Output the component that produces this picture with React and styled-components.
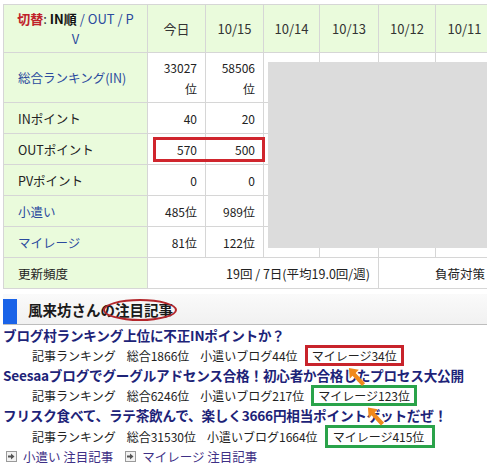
import React from "react";
import styled, { createGlobalStyle } from "styled-components";

const Global = createGlobalStyle`
  html, body { margin: 0; padding: 0; background: #fff; overflow: hidden; }
  body { font-family: "Noto Sans CJK JP", "Noto Sans", sans-serif; color: #222; }
`;

const Page = styled.div`
  width: 487px;
  height: 474px;
  padding: 4px 0 0 3px;
  box-sizing: border-box;
  overflow: hidden;
`;

const TableWrap = styled.div`
  position: relative;
  width: 484px;
  overflow: hidden;
`;

const Table = styled.table`
  border-collapse: collapse;
  table-layout: fixed;
  width: 490px;
  font-size: 12px;
`;

const Th = styled.th`
  background: #eafbdc;
  border: 1px solid #d6d6d6;
  font-weight: normal;
  font-size: 13px;
  height: 47px;
  padding: 0;
  text-align: center;
  color: #333;
  line-height: 20px;
`;

const Label = styled.td`
  background: #eafbdc;
  border: 1px solid #d6d6d6;
  padding: 0 0 0 14px;
  height: ${(p) => p.$h || 30}px;
  color: ${(p) => (p.$link ? "#2b4a9e" : "#222")};
  font-size: 12.5px;
`;

const Num = styled.td`
  border: 1px solid #d6d6d6;
  text-align: right;
  padding: 0 8px 0 0;
  line-height: 21px;
  color: #222;
`;

const Empty = styled.td`
  border: 1px solid #d6d6d6;
`;

const Wide = styled.td`
  border: 1px solid #d6d6d6;
  text-align: ${(p) => p.$align || "right"};
  padding: ${(p) => p.$pad || "0 8px 0 0"};
  white-space: nowrap;
  font-size: 12.5px;
`;

const Red = styled.span`
  color: #c0222a;
  font-weight: bold;
`;
const Bold = styled.span`
  font-weight: bold;
  color: #111;
`;
const HLink = styled.span`
  color: #2b4a9e;
`;

const GrayBlock = styled.div`
  position: absolute;
  left: 265px;
  top: 58px;
  width: 240px;
  height: 186px;
  background: #dcdcdc;
`;

const RedRect = styled.div`
  position: absolute;
  left: 150px;
  top: 133px;
  width: 112px;
  height: 25px;
  box-sizing: border-box;
  border: 3px solid #d0252d;
`;

const Heading = styled.div`
  position: relative;
  margin-top: 5px;
  height: 31px;
  box-sizing: border-box;
  display: flex;
  align-items: flex-end;
  gap: 11px;
  background: linear-gradient(#fafafa, #f1f1f1);
  border-bottom: 1px solid #bdbdbd;
`;

const BlueMark = styled.div`
  width: 14px;
  height: 25px;
  background: #1a63e8;
`;

const HeadText = styled.div`
  font-size: 14.5px;
  font-weight: bold;
  color: #1a1a1a;
  line-height: 29px;
  align-self: center;
`;

const Ellipse = styled.div`
  position: absolute;
  left: 100px;
  top: 5px;
  width: 74px;
  height: 22px;
  box-sizing: border-box;
  border: 2.5px solid #b3262b;
  border-radius: 50%;
`;

const Articles = styled.div`
  position: relative;
  width: 484px;
`;

const Title = styled.div`
  font-size: 13.6px;
  font-weight: bold;
  color: #1d2378;
  line-height: 20px;
  white-space: nowrap;
  letter-spacing: -0.2px;
`;

const Meta = styled.div`
  display: flex;
  align-items: center;
  gap: 11px;
  padding-left: 29px;
  height: ${(p) => p.$h || 20}px;
  font-size: 12px;
  color: #222;
  white-space: nowrap;
`;

const Boxed = styled.span`
  display: inline-block;
  margin-left: -4px;
  padding: ${(p) => (p.$tall ? "1px 8px 1px 5px" : "0 4px 0 4px")};
  line-height: 15px;
  border: 3px solid ${(p) => (p.$green ? "#2aa34a" : "#c8232b")};
`;

const Arrow = styled.svg`
  position: absolute;
  left: ${(p) => p.$x}px;
  top: ${(p) => p.$y}px;
`;

const Links = styled.div`
  display: flex;
  align-items: center;
  gap: 6px;
  padding-left: 3px;
  font-size: 12.5px;
  line-height: 17px;
  color: #3e2f86;
`;

const LinkItem = styled.span`
  margin-right: 6px;
`;

const IconBox = styled.span`
  display: inline-flex;
  align-items: center;
  justify-content: center;
  width: 9px;
  height: 9px;
  border: 1px solid #9a9a9a;
  background: #f2f2f2;
`;

const OrangeArrow = ({ x, y, w, h }) => (
  <Arrow $x={x} $y={y} width={w} height={h} viewBox="0 0 20 22">
    <polygon
      points="1,1 12,3 8.5,6.5 19,18 15.5,21 5,9.5 2,13"
      fill="#f0891c"
    />
  </Arrow>
);

const SmallIcon = () => (
  <IconBox>
    <svg width="7" height="7" viewBox="0 0 7 7">
      <polygon points="0,2.5 3,2.5 3,0.5 6.5,3.5 3,6.5 3,4.5 0,4.5" fill="#555" />
    </svg>
  </IconBox>
);

const rows = [
  { label: "INポイント", a: "40", b: "20" },
  { label: "OUTポイント", a: "570", b: "500" },
  { label: "PVポイント", a: "0", b: "0" },
  { label: "小遣い", a: "485位", b: "989位", link: true },
  { label: "マイレージ", a: "81位", b: "122位", link: true },
];

const articles = [
  {
    title: "ブログ村ランキング上位に不正INポイントか？",
    total: "総合1866位",
    kozukai: "小遣いブログ44位",
    mileage: "マイレージ34位",
  },
  {
    title: "Seesaaブログでグーグルアドセンス合格！初心者か合格したプロセス大公開",
    total: "総合6246位",
    kozukai: "小遣いブログ217位",
    mileage: "マイレージ123位",
    green: true,
  },
  {
    title: "フリスク食べて、ラテ茶飲んで、楽しく3666円相当ポイントゲットだぜ！",
    total: "総合31530位",
    kozukai: "小遣いブログ1664位",
    mileage: "マイレージ415位",
    green: true,
    tall: true,
  },
];

export default function App() {
  return (
    <Page>
      <Global />
      <TableWrap>
        <Table>
          <colgroup>
            <col style={{ width: 144 }} />
            <col style={{ width: 58 }} />
            <col style={{ width: 58 }} />
            <col style={{ width: 56 }} />
            <col style={{ width: 59 }} />
            <col style={{ width: 57 }} />
            <col style={{ width: 58 }} />
          </colgroup>
          <thead>
            <tr>
              <Th>
                <Red>切替</Red>: <Bold>IN順</Bold> <HLink>/ OUT / P</HLink>
                <br />
                <HLink>V</HLink>
              </Th>
              <Th>今日</Th>
              <Th>10/15</Th>
              <Th>10/14</Th>
              <Th>10/13</Th>
              <Th>10/12</Th>
              <Th>10/11</Th>
            </tr>
          </thead>
          <tbody>
            <tr>
              <Label $h={49} $link>総合ランキング(IN)</Label>
              <Num>
                33027
                <br />位
              </Num>
              <Num>
                58506
                <br />位
              </Num>
              <Empty />
              <Empty />
              <Empty />
              <Empty />
            </tr>
            {rows.map((r) => (
              <tr key={r.label}>
                <Label $link={r.link}>{r.label}</Label>
                <Num>{r.a}</Num>
                <Num>{r.b}</Num>
                <Empty />
                <Empty />
                <Empty />
                <Empty />
              </tr>
            ))}
            <tr>
              <Label>更新頻度</Label>
              <Wide colSpan={4}>19回 / 7日(平均19.0回/週)</Wide>
              <Wide colSpan={2} $align="left" $pad="0 0 0 56px">
                負荷対策
              </Wide>
            </tr>
          </tbody>
        </Table>
        <GrayBlock />
        <RedRect />
      </TableWrap>

      <Heading>
        <BlueMark />
        <HeadText>風来坊さんの注目記事</HeadText>
        <Ellipse />
      </Heading>

      <Articles>
        {articles.map((a) => (
          <React.Fragment key={a.title}>
            <Title>{a.title}</Title>
            <Meta $h={a.tall ? 23 : 20}>
              <span>記事ランキング</span>
              <span>{a.total}</span>
              <span>{a.kozukai}</span>
              <Boxed $green={a.green} $tall={a.tall}>
                {a.mileage}
              </Boxed>
            </Meta>
          </React.Fragment>
        ))}
        <Links>
          <SmallIcon />
          <LinkItem>小遣い 注目記事</LinkItem>
          <SmallIcon />
          <LinkItem>マイレージ 注目記事</LinkItem>
        </Links>
        <OrangeArrow x={345} y={42} w={18} h={20} />
        <OrangeArrow x={364} y={81} w={18} h={21} />
      </Articles>
    </Page>
  );
}
